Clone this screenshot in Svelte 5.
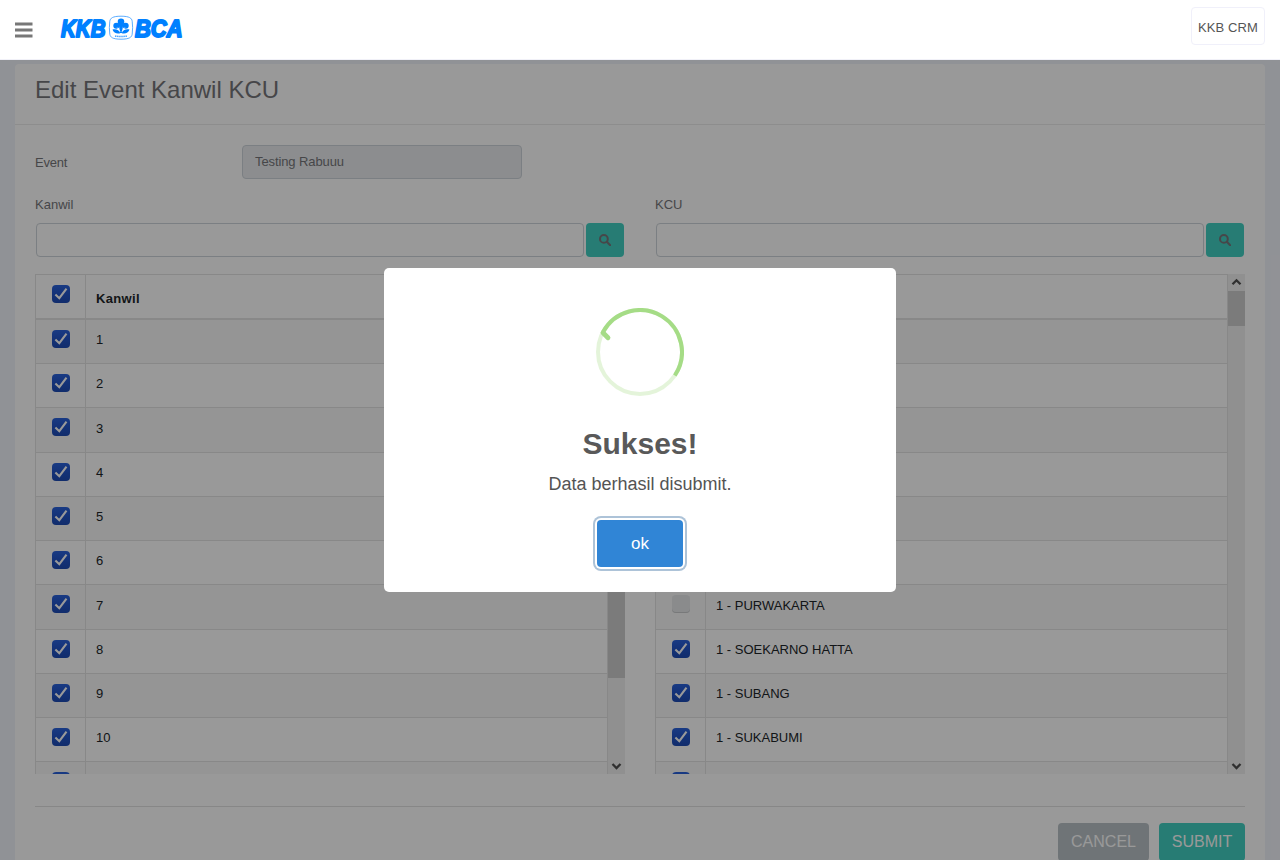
<script>
  const kanwil = ['1', '2', '3', '4', '5', '6', '7', '8', '9', '10', ''].map((name) => ({ name, on: true }));
  const kcu = [
    ...Array.from({ length: 6 }, () => ({ name: '', on: true })),
    { name: '1 - PURWAKARTA', on: false },
    { name: '1 - SOEKARNO HATTA', on: true },
    { name: '1 - SUBANG', on: true },
    { name: '1 - SUKABUMI', on: true },
    { name: '', on: true }
  ];
  const panels = [
    { label: 'Kanwil', head: 'Kanwil', rows: kanwil, thumb: 387 },
    { label: 'KCU', head: '', rows: kcu, thumb: 35 }
  ];
</script>

{#snippet check(on)}
  <span class="check" class:off={!on}>
    {#if on}
      <svg width="18" height="18" viewBox="0 0 18 18"><path d="M3.400 9.400 7.300 13.200 14.500 3.600" fill="none" stroke="#fff" stroke-width="2.100" /></svg>
    {/if}
  </span>
{/snippet}

<div class="page">
  <header>
    <svg class="burger" width="18" height="16" viewBox="0 0 18 16"><path d="M0 2h17.500M0 8h17.500M0 14h17.500" stroke="#777" stroke-width="3" /></svg>
    <svg class="logo" width="136" height="34" viewBox="0 0 136 34">
      <g fill="#0080ff" stroke="#0080ff" stroke-width="2" stroke-linejoin="round" font-family="Liberation Sans" font-weight="700" font-style="italic" font-size="24.500">
        <text x="2" y="22.700" textLength="44.500" lengthAdjust="spacingAndGlyphs">KKB</text>
        <text x="76" y="22.700" textLength="47.500" lengthAdjust="spacingAndGlyphs">BCA</text>
      </g>
      <path d="M62 2.200c8.500 0 10.700 2 11.200 5q.9 6.500 0 13c-.5 3-2.700 5-11.200 5s-10.700-2-11.200-5q-.9-6.500 0-13c.5-3 2.700-5 11.200-5z" fill="#fff" stroke="#4aa3ff" stroke-width=".9" />
      <g fill="#0080ff">
        <circle cx="62" cy="7.900" r="3.300" />
        <circle cx="57.300" cy="11.700" r="3" />
        <circle cx="66.700" cy="11.700" r="3" />
        <path d="M59.500 9h5l-1.600 10h-1.800z" />
        <path d="M61.300 19.300c-3 .8-6.800.2-7.800-3.700 3.600-.8 6.800.4 7.800 3.700zM62.700 19.300c3 .8 6.800.2 7.800-3.700-3.600-.8-6.800.4-7.800 3.700z" />
      </g>
      <path d="M61.200 17.500l-3-4M62.800 17.500l3-4" stroke="#fff" stroke-width=".7" />
      <path d="M56 21.900q6 1.300 12 0" fill="none" stroke="#4aa3ff" stroke-width="1.500" stroke-dasharray="1.500 .6" />
    </svg>
    <div class="user">KKB CRM</div>
  </header>

  <main>
    <h1>Edit Event Kanwil KCU</h1>
    <div class="body">
      <div class="event">
        <span class="name">Event</span>
        <div class="field">Testing Rabuuu</div>
      </div>
      <div class="panels">
        {#each panels as p}
          <section>
            <div class="label">{p.label}</div>
            <div class="search">
              <div class="input"></div>
              <div class="go">
                <svg width="12" height="12" viewBox="0 0 12 12"><circle cx="4.900" cy="4.900" r="3.900" fill="none" stroke="#76767a" stroke-width="2" /><path d="M7.800 7.800 11.200 11.200" stroke="#76767a" stroke-width="2.200" stroke-linecap="round" /></svg>
              </div>
            </div>
            <div class="list">
              <div class="table">
                <div class="row head">
                  <div class="cell">{@render check(true)}</div>
                  <div class="text">{p.head}</div>
                </div>
                {#each p.rows as r, i}
                  <div class="row" class:odd={i % 2 === 0}>
                    <div class="cell">{@render check(r.on)}</div>
                    <div class="text">{r.name}</div>
                  </div>
                {/each}
              </div>
              <div class="scroll">
                <svg width="17" height="17" viewBox="0 0 17 17"><path d="M4.500 10.300 8.500 6.300 12.500 10.300" fill="none" stroke="#505050" stroke-width="2.300" /></svg>
                <div class="thumb" style="height: {p.thumb}px"></div>
                <svg class="down" width="17" height="17" viewBox="0 0 17 17"><path d="M4.500 7 8.500 11 12.500 7" fill="none" stroke="#505050" stroke-width="2.300" /></svg>
              </div>
            </div>
          </section>
        {/each}
      </div>
      <div class="actions">
        <div class="btn grey">CANCEL</div>
        <div class="btn teal">SUBMIT</div>
      </div>
    </div>
  </main>

  <div class="overlay">
    <div class="modal">
      <svg class="ring" width="88" height="88" viewBox="0 0 88 88" fill="none">
        <circle cx="44" cy="44" r="42" stroke="#a5dc86" stroke-opacity=".3" stroke-width="4" />
        <path d="M7.050 24.020A42 42 0 1 1 78.820 67.490" stroke="#a5dc86" stroke-width="4" />
        <path d="M7 24.800 12 29.800" stroke="#a5dc86" stroke-width="4.800" stroke-linecap="round" />
      </svg>
      <h2>Sukses!</h2>
      <p>Data berhasil disubmit.</p>
      <div class="ok">ok</div>
    </div>
  </div>
</div>

<style>
  :global(body) { overflow: hidden; }
  .page { position: relative; height: 860px; overflow: hidden; background: #f1f3fa; font: 13px/20px "Liberation Sans", Arial, sans-serif; color: #76767a; }
  .page, .page * { box-sizing: border-box; }
  svg { display: block; flex: none; }
  header { position: relative; z-index: 3; height: 60px; background: #fff; border-bottom: 1px solid #f1f1f8; display: flex; align-items: flex-start; padding: 0 15px; }
  .burger { margin-top: 22px; }
  .logo { margin: 14px 0 0 26px; overflow: visible; }
  .user { margin: 7px 0 0 auto; width: 74px; height: 38px; border: 1px solid #f0f0fa; border-radius: 4px; color: #555; line-height: 39px; text-align: center; white-space: nowrap; letter-spacing: .1px; }
  main { margin: 4px 15px 0; height: 820px; background: #fff; border-radius: 4px; }
  h1 { margin: 0; height: 61px; padding: 8px 20px 0; border-bottom: 1px solid #ececec; font-size: 24px; line-height: 36px; font-weight: 400; color: #76767a; }
  .body { padding: 20px 20px 0; }
  .event { display: flex; height: 34px; letter-spacing: -.1px; }
  .name { width: 207px; line-height: 35px; letter-spacing: -.2px; }
  .field { width: 280px; height: 34px; border: 1px solid #ced4da; border-radius: 4px; background: #e9ecef; padding-left: 12px; line-height: 32px; }
  .panels { display: grid; grid-template-columns: 590px 590px; column-gap: 30px; margin-top: 15px; }
  .label { height: 29px; line-height: 21px; }
  .search { display: flex; gap: 2px; padding: 0 1px; height: 34px; }
  .input { width: 548px; border: 1px solid #ced4da; border-radius: 4px; }
  .go { width: 38px; border-radius: 4px; background: #41cfc1; display: flex; align-items: center; justify-content: center; }
  .list { margin-top: 17px; height: 500px; overflow: hidden; display: flex; }
  .table { width: 573px; border: 1px solid #e3e3e3; border-width: 1px 1px 0; }
  .row { display: flex; height: 44.22px; border-bottom: 1px solid #e3e3e3; color: #212529; }
  .odd { background: #f8f8f8; }
  .head { height: 45px; border-bottom-width: 2px; font-weight: 700; letter-spacing: .35px; }
  .cell { width: 50px; border-right: 1px solid #e3e3e3; padding: 10px 0 0 16px; }
  .text { padding: 10.2px 0 0 10px; white-space: nowrap; }
  .head .text { padding-top: 14px; }
  .check { display: block; width: 18px; height: 18px; border-radius: 4px; background: linear-gradient(#2a62dc, #2255c9 45%, #1d4bb4); }
  .off { background: #e6e8ea; box-shadow: inset 0 -1px 0 #c8cacc; }
  .scroll { width: 17px; background: #f0f0f0; display: flex; flex-direction: column; }
  .thumb { background: #cdcdcd; }
  .down { margin-top: auto; }
  .actions { margin-top: 32px; border-top: 1px solid #e1e1e1; padding-top: 16px; display: flex; justify-content: flex-end; gap: 10px; }
  .btn { height: 38px; border-radius: 4px; color: #fff; font-size: 16px; line-height: 37px; text-align: center; }
  .grey { width: 91px; background: #bac2c7; }
  .teal { width: 86px; background: #41cfc1; }
  .overlay { position: absolute; inset: 0; z-index: 2; background: rgba(0, 0, 0, .4); display: flex; align-items: center; justify-content: center; }
  .modal { width: 512px; height: 324px; border-radius: 5px; background: #fff; display: flex; flex-direction: column; align-items: center; padding-top: 40px; }
  h2 { margin: 30px 0 0; font-size: 30px; line-height: 36px; color: #595959; }
  p { margin: 11px 0 0; font-size: 18px; line-height: 22px; color: #545454; }
  .ok { margin-top: 25px; width: 86px; height: 47px; border-radius: 4px; background: #3085d6; color: #fff; font-size: 17px; line-height: 47px; text-align: center; box-shadow: 0 0 0 2px #fff, 0 0 0 4px #adc3d8; }
</style>
